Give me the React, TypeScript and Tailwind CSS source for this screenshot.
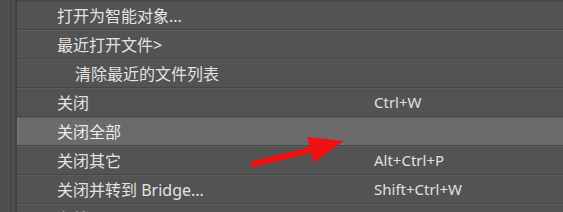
import React from "react";

type Item = { label: string; shortcut?: string; indent?: boolean; active?: boolean };

const items: Item[] = [
  { label: "打开为智能对象..." },
  { label: "最近打开文件>" },
  { label: "清除最近的文件列表", indent: true },
  { label: "关闭", shortcut: "Ctrl+W" },
  { label: "关闭全部", active: true },
  { label: "关闭其它", shortcut: "Alt+Ctrl+P" },
  { label: "关闭并转到 Bridge...", shortcut: "Shift+Ctrl+W" },
  { label: "存储", shortcut: "Ctrl+S" },
];

export default function App() {
  return (
    <div
      className="relative w-[563px] h-[212px] overflow-hidden bg-[#535353] flex"
      style={{ fontFamily: '"Noto Sans", "Noto Sans CJK SC", sans-serif' }}
    >
      <div className="w-[17px] shrink-0 bg-[#4d4d4d] flex">
        <div className="w-[10px] bg-[#4f4f4f]" />
        <div className="w-[2px] bg-[#474747]" />
        <div className="w-[3px] bg-[#4d4d4d]" />
        <div className="w-[2px] bg-[#424242]" />
      </div>
      <div className="flex-1 flex flex-col border-t-2 border-[#484848]">
        {items.map((it, i) => (
          <div key={i} className="shrink-0 flex flex-col">
            <div
              className={
                "h-[27px] flex items-center text-[16px] leading-none " +
                (it.active
                  ? "bg-[#6b6b6b] border-l-2 border-[#767676] text-[#ececec]"
                  : "text-[#e2e2e2]")
              }
            >
              <div
                className={
                  (it.indent ? "pl-[58px] " : "pl-[40px] ") +
                  (it.active ? "-ml-[2px] " : "") +
                  "w-[357px] shrink-0 whitespace-nowrap"
                }
              >
                {it.label}
              </div>
              {it.shortcut && (
                <div className="text-[15px] text-[#e0e0e0] whitespace-nowrap">{it.shortcut}</div>
              )}
            </div>
            <div className="h-px bg-[#464646]" />
            <div className="h-px bg-[#5c5c5c]" />
          </div>
        ))}
      </div>
      <svg
        className="absolute left-0 top-0 pointer-events-none"
        width="563"
        height="212"
        viewBox="0 0 563 212"
      >
        <line x1="254" y1="164" x2="316" y2="149" stroke="#ee1111" strokeWidth="6" strokeLinecap="round" />
        <polygon points="307,137 344,141 314,163" fill="#ee1111" />
      </svg>
    </div>
  );
}
